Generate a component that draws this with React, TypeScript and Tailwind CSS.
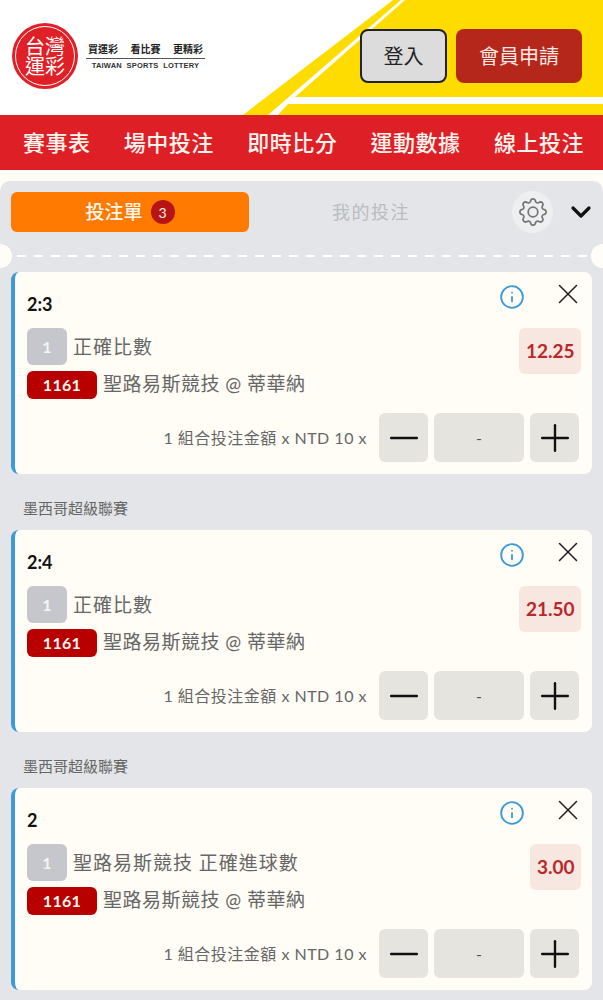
import React from 'react';
import { ChevronDown, Info, Minus, Plus, X } from 'lucide-react';
import { BsGear } from 'react-icons/bs';

const navItems = ['賽事表', '場中投注', '即時比分', '運動數據', '線上投注'];

const bets = [
  { pick: '2:3', market: '正確比數', odds: '12.25' },
  { pick: '2:4', market: '正確比數', odds: '21.50', league: '墨西哥超級聯賽' },
  { pick: '2', market: '聖路易斯競技 正確進球數', odds: '3.00', league: '墨西哥超級聯賽' },
];

const Logo: React.FC = () => (
  <div className="flex items-center">
    <div className="flex h-[66px] w-[66px] items-center justify-center rounded-full bg-[#e01f26] p-[3px]">
      <div className="grid h-full w-full grid-cols-[20px_20px] content-center justify-center rounded-full border border-white text-[20px] leading-[20px] text-white">
        <span>台</span>
        <span>灣</span>
        <span>運</span>
        <span>彩</span>
      </div>
    </div>
    <div className="ml-2 flex w-[119px] flex-col items-center">
      <div className="flex w-full justify-between px-[2px] text-[10px] leading-[18px] font-bold text-[#222]">
        <span>買運彩</span>
        <span>看比賽</span>
        <span>更精彩</span>
      </div>
      <div className="h-px w-full bg-[#555]" />
      <div className="font-['Liberation_Sans',sans-serif] text-[7.5px] leading-[13px] font-bold tracking-[0.2px] text-[#333]">
        TAIWAN&nbsp; SPORTS&nbsp; LOTTERY
      </div>
    </div>
  </div>
);

const Header: React.FC = () => (
  <header className="relative flex h-[115px] items-start justify-between overflow-hidden bg-white pt-[29px] pr-[21px] pl-3">
    <svg className="absolute inset-0" width="603" height="115" viewBox="0 0 603 115">
      <polygon points="393,0 603,0 603,115 243,115" fill="#ffdc00" />
      <polygon points="401,0 405,0 295,97 603,97 603,104 288,104 278,115 268,115" fill="#ffffff" />
    </svg>
    <div className="relative -mt-[6px]">
      <Logo />
    </div>
    <div className="relative flex gap-[9px]">
      <button className="h-[54px] w-[87px] rounded-lg border-2 border-[#222] bg-[#dcdcdc] text-[20px] text-[#222]">
        登入
      </button>
      <button className="h-[54px] w-[126px] rounded-lg bg-[#b5271b] text-[20px] text-[#fbe9e4]">
        會員申請
      </button>
    </div>
  </header>
);

const BetCard: React.FC<{ pick: string; market: string; odds: string }> = ({ pick, market, odds }) => (
  <div className="mx-[11px] flex h-[202px] flex-col rounded-lg border-l-4 border-[#3b9ad9] bg-[#fffdf5] pl-3">
    <div className="flex h-[56px] justify-between pr-[7px]">
      <div className="mt-5 text-[18px] leading-6 font-bold text-[#111]">{pick}</div>
      <div className="flex items-start gap-[26px]">
        <Info size={26} strokeWidth={1.7} className="mt-3 text-[#3b9ad9]" />
        <X size={34} strokeWidth={1.1} className="mt-[5px] text-[#222]" />
      </div>
    </div>
    <div className="flex items-start justify-between pr-[11px]">
      <div className="flex flex-col gap-[6px]">
        <div className="flex h-[37px] items-center gap-[6px]">
          <span className="flex h-[37px] w-10 items-center justify-center rounded-md bg-[#c5c7cc] text-[16px] font-bold text-[#f4f4f4]">
            1
          </span>
          <span className="pt-[2px] text-[19px] tracking-[1px] text-[#666]">{market}</span>
        </div>
        <div className="flex h-7 items-center gap-[6px]">
          <span className="flex h-7 w-[70px] items-center justify-center rounded-md bg-[#b80000] text-[16px] font-bold tracking-[0.3px] text-[#fff7ee]">
            1161
          </span>
          <span className="pb-[1px] text-[19px] tracking-[0.5px] text-[#666]">聖路易斯競技 @ 蒂華納</span>
        </div>
      </div>
      <div className="flex h-[46px] items-center rounded-md bg-[#f8e6e0] px-[6.5px] text-[19px] font-bold text-[#b8282a]">
        {odds}
      </div>
    </div>
    <div className="mt-[14px] flex items-center justify-end gap-[6px] pr-[13px]">
      <span className="mr-[6px] text-[16px] tracking-[0.5px] text-[#666]">1 組合投注金額 x NTD 10 x</span>
      <button className="flex h-[49px] w-[49px] items-center justify-center rounded-md bg-[#e6e4df] text-[#111]">
        <Minus size={44} strokeWidth={1.3} />
      </button>
      <div className="flex h-[49px] w-[90px] items-center justify-center rounded-md bg-[#e6e4df] text-[16px] text-[#555]">
        -
      </div>
      <button className="flex h-[49px] w-[49px] items-center justify-center rounded-md bg-[#e6e4df] text-[#111]">
        <Plus size={44} strokeWidth={1.3} />
      </button>
    </div>
  </div>
);

const App: React.FC = () => {
  return (
    <div className="h-[1000px] overflow-hidden bg-[#fffdf5] font-['Lato','Noto_Sans_CJK_TC',sans-serif]">
      <Header />
      <nav className="flex h-[55px] items-center justify-between bg-[#df1f26] pr-[19px] pl-[23px] text-[22px] font-medium tracking-[0.5px] text-[#fff5ee]">
        {navItems.map((item) => (
          <span key={item}>{item}</span>
        ))}
      </nav>
      <section className="mt-[11px] h-[819px] rounded-t-[10px] bg-[#e3e5e8] pt-[10px]">
        <div className="flex items-center pr-[6px] pl-[11px]">
          <div className="flex h-10 w-[238px] items-center justify-center gap-2 rounded-md bg-[#ff7a00] text-[19px] font-medium text-[#fff7ee]">
            投注單
            <span className="flex h-6 w-6 items-center justify-center rounded-full bg-[#b81414] text-[14px] font-normal">
              3
            </span>
          </div>
          <div className="flex-1 pr-[19px] text-center text-[18px] tracking-[1.5px] text-[#b9bcc0]">我的投注</div>
          <div className="flex h-[42px] w-[41px] items-center justify-center rounded-full bg-[#edeff1]">
            <BsGear size={28} className="text-[#777]" />
          </div>
          <ChevronDown size={32} strokeWidth={2.4} className="ml-3 text-[#111]" />
        </div>
        <div className="relative h-[39px]">
          <div className="absolute top-[22px] right-0 left-0 h-[2px] bg-[repeating-linear-gradient(to_right,#ffffff_0,#ffffff_9px,transparent_9px,transparent_17px)]" />
          <div className="absolute top-[11px] -left-[12px] h-6 w-6 rounded-full bg-[#fffdf5]" />
          <div className="absolute top-[11px] -right-[12px] h-6 w-6 rounded-full bg-[#fffdf5]" />
        </div>
        {bets.map((bet) => (
          <div key={bet.pick}>
            {bet.league && (
              <div className="pt-6 pb-3 pl-[23px] text-[15px] leading-5 text-[#666]">{bet.league}</div>
            )}
            <BetCard pick={bet.pick} market={bet.market} odds={bet.odds} />
          </div>
        ))}
      </section>
    </div>
  );
};

export default App;
